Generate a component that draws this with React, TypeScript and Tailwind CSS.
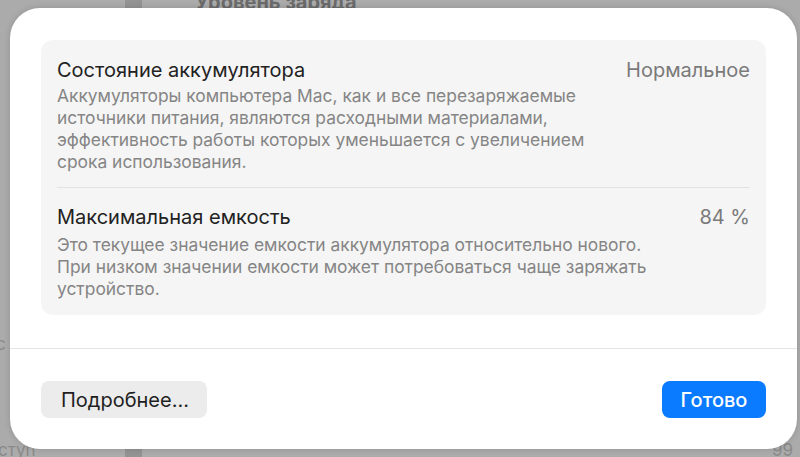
const rows = [
  {
    title: "Состояние аккумулятора",
    value: "Нормальное",
    text: [
      "Аккумуляторы компьютера Mac, как и все перезаряжаемые",
      "источники питания, являются расходными материалами,",
      "эффективность работы которых уменьшается с увеличением",
      "срока использования.",
    ],
  },
  {
    title: "Максимальная емкость",
    value: "84 %",
    text: [
      "Это текущее значение емкости аккумулятора относительно нового.",
      "При низком значении емкости может потребоваться чаще заряжать",
      "устройство.",
    ],
  },
];

export default function App() {
  return (
    <div
      className="relative h-[457px] w-[800px] overflow-hidden bg-[#ababab] pb-[8px] pl-[10px] pr-[3px] pt-[8px]"
      style={{ fontFamily: "Inter, 'Noto Sans', sans-serif" }}
    >
      {/* window behind the sheet */}
      <div className="absolute left-[125px] top-0 h-full w-[17px] bg-[#939393]" />
      <div className="absolute left-[195px] top-[-13px] text-[20px] font-bold text-[#6b6b6b]">
        Уровень заряда
      </div>
      <div className="absolute left-[-4px] top-[332px] text-[17px] text-[#8a8a8a]">с</div>
      <div className="absolute left-[-2px] top-[438px] text-[17px] text-[#8a8a8a]">ступ</div>
      <div className="absolute left-[772px] top-[438px] text-[17px] text-[#8a8a8a]">99</div>

      <div className="relative flex h-full flex-col rounded-[30px] bg-white shadow-[0_0_6px_rgba(0,0,0,0.15)]">
        <div className="px-[31px] pt-[32px]">
          <div className="rounded-[12px] bg-[#f5f5f5] px-[16px]">
            {rows.map((row, i) => (
              <div
                key={row.title}
                className={
                  i === 0
                    ? "border-b border-[#e2e2e2] pb-[14px] pt-[18px]"
                    : "pb-[15px] pt-[17px]"
                }
              >
                <div className="flex items-start justify-between">
                  <div className="text-[20px] leading-[24px] text-[#222222]">
                    {row.title}
                  </div>
                  <div className="text-[20px] leading-[24px] text-[#7a7a7a]">
                    {row.value}
                  </div>
                </div>
                <div
                  className={
                    (i === 0 ? "mt-[3px]" : "mt-[5px]") +
                    " text-[17.4px] leading-[22px] text-[#858585]"
                  }
                >
                  {row.text.map((line) => (
                    <div key={line}>{line}</div>
                  ))}
                </div>
              </div>
            ))}
          </div>
        </div>

        <div className="mt-[33px] border-t border-[#e4e4e4]" />

        <div className="flex items-center justify-between px-[31px] pt-[32px]">
          <button className="h-[37px] w-[166px] rounded-[8px] bg-[#ececec] pl-[20px] text-left text-[20px] text-[#1f1f1f]">
            Подробнее...
          </button>
          <button className="h-[37px] w-[104px] rounded-[8px] bg-[#0a7aff] text-[20px] font-medium text-white">
            Готово
          </button>
        </div>
      </div>
    </div>
  );
}
